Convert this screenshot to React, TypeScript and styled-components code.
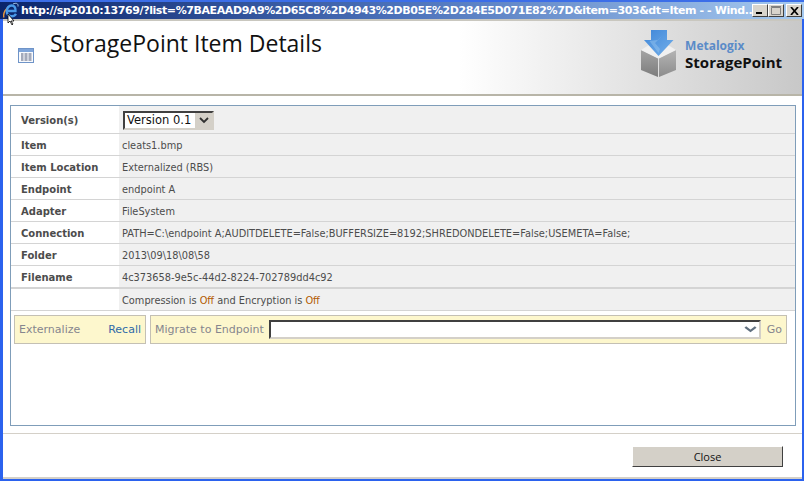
import React from 'react';
import styled, { createGlobalStyle } from 'styled-components';

const GlobalStyle = createGlobalStyle`
  html, body {
    margin: 0;
    padding: 0;
    background: #ffffff;
  }
`;

const Frame = styled.div`
  position: relative;
  width: 804px;
  height: 481px;
  box-sizing: border-box;
  display: flex;
  flex-direction: column;
  background: #2b62ee;
  padding: 0 2px 2px 3px;
  overflow: hidden;
  font-family: "DejaVu Sans", Verdana, sans-serif;
`;

const TitleBar = styled.div`
  height: 19px;
  flex: none;
  box-sizing: border-box;
  margin: 0 -2px 0 -3px;
  padding: 0 2px 0 3px;
  border-top: 2px solid #3c6ee8;
  display: flex;
  align-items: center;
  background: linear-gradient(90deg, #0a246a 0%, #4c72bb 50%, #a6caf0 100%);
`;

const TitleText = styled.div`
  flex: 1;
  min-width: 0;
  margin-left: 18px;
  color: #ffffff;
  font-size: 11px;
  font-weight: 700;
  letter-spacing: -0.41px;
  white-space: nowrap;
`;

const WinButtons = styled.div`
  display: flex;
  flex: none;
  margin-left: 5px;
`;

const WinButton = styled.div<{ $gap?: boolean }>`
  width: 16px;
  height: 13px;
  box-sizing: border-box;
  margin-left: ${p => (p.$gap ? 2 : 0)}px;
  background: #d8d4cc;
  border: 1px solid;
  border-color: #ffffff #404040 #404040 #ffffff;
  display: flex;
  align-items: center;
  justify-content: center;
`;

const Page = styled.div`
  flex: 1;
  min-height: 0;
  display: flex;
  flex-direction: column;
  background: #ffffff;
`;

const Header = styled.div`
  height: 77px;
  flex: none;
  box-sizing: border-box;
  border-top: 2px solid #c9c7bf;
  border-bottom: 2px solid #b8b5a8;
  background: linear-gradient(90deg, #ffffff 0%, #ffffff 57%, #c8c8c8 100%);
  display: flex;
`;

const PageIcon = styled.div`
  width: 16px;
  margin: 27px 0 0 15px;
`;

const PageTitle = styled.h1`
  flex: 1;
  margin: 8px 0 0 16px;
  font-family: "Open Sans", sans-serif;
  font-size: 23px;
  font-weight: 400;
  line-height: 28px;
  color: #111111;
  white-space: nowrap;
`;

const Logo = styled.div`
  display: flex;
  align-items: flex-start;
  padding-top: 9px;
  gap: 8px;
  margin-right: 20px;
`;

const LogoWords = styled.div`
  display: flex;
  flex-direction: column;
  margin-top: 8px;
`;

const LogoTop = styled.span`
  font-family: "Open Sans", sans-serif;
  font-size: 12px;
  font-weight: 700;
  line-height: 15px;
  color: #5b8bc8;
`;

const LogoBottom = styled.span`
  font-family: "Open Sans", sans-serif;
  font-size: 15px;
  font-weight: 700;
  line-height: 19px;
  color: #111111;
`;

const Panel = styled.div`
  margin: 9px 6px 0 7px;
  height: 321px;
  flex: none;
  box-sizing: border-box;
  border: 1px solid #7f9db9;
  display: flex;
  flex-direction: column;
`;

const Row = styled.div<{ $h: number; $thick?: boolean }>`
  height: ${p => p.$h}px;
  flex: none;
  box-sizing: border-box;
  display: flex;
  border-bottom: ${p => (p.$thick ? 2 : 1)}px solid #d4d4d4;
`;

const Label = styled.div`
  width: 108px;
  box-sizing: border-box;
  padding: 1px 0 0 10px;
  display: flex;
  align-items: center;
  font-size: 10px;
  font-weight: 700;
  color: #4c4c4c;
`;

const Value = styled.div`
  flex: 1;
  box-sizing: border-box;
  padding: 1px 0 0 3px;
  display: flex;
  align-items: center;
  background: #f0f0f0;
  font-size: 9.8px;
  color: #4c4c4c;
  white-space: pre;
`;

const Off = styled.span`
  color: #b35a00;
`;

const SelectBox = styled.div<{ $width?: number }>`
  height: 19px;
  box-sizing: border-box;
  display: flex;
  align-items: center;
  background: #ffffff;
  border: 2px solid;
  border-color: #404040 #d4d0c8 #d4d0c8 #404040;
  ${p => (p.$width ? `width: ${p.$width}px; margin-left: 1px;` : 'flex: 1;')}
`;

const SelectText = styled.div`
  flex: 1;
  padding-left: 2px;
  font-size: 11.5px;
  color: #111111;
`;

const SelectArrow = styled.div<{ $flat?: boolean }>`
  width: 17px;
  height: 15px;
  flex: none;
  display: flex;
  align-items: center;
  justify-content: center;
  background: ${p => (p.$flat ? '#ffffff' : '#d4d0c8')};
`;

const Actions = styled.div`
  display: flex;
  gap: 4px;
  margin: 4px 8px 0 3px;
`;

const ActionBox = styled.div<{ $grow?: boolean }>`
  height: 29px;
  box-sizing: border-box;
  border: 1px solid #c4c0b4;
  background: #fdf7cd;
  display: flex;
  align-items: center;
  padding: 0 4px;
  font-size: 11px;
  color: #86868e;
  ${p => (p.$grow ? 'flex: 1;' : 'width: 132px; justify-content: space-between;')}
`;

const ActionLink = styled.span`
  color: #2f6aa8;
`;

const GoLabel = styled.span`
  margin-left: 6px;
`;

const EndpointLabel = styled.span`
  margin-right: 5px;
`;

const Footer = styled.div`
  flex: 1;
  margin-top: 7px;
  border-top: 1px solid #d4d0c8;
  border-bottom: 2px solid #d4d0c8;
  display: flex;
  justify-content: flex-end;
  align-items: flex-start;
  padding: 12px 19px 0 0;
`;

const CloseButton = styled.button`
  width: 151px;
  height: 21px;
  box-sizing: border-box;
  padding: 0;
  background: #d4d0c8;
  border: 1px solid;
  border-color: #ffffff #404040 #404040 #ffffff;
  font-family: "Open Sans", sans-serif;
  font-size: 11px;
  color: #111111;
`;

const IeIcon = styled.svg`
  position: absolute;
  left: 3px;
  top: 2px;
`;

const Cursor = styled.svg`
  position: absolute;
  left: 7px;
  top: 14px;
`;

const Chevron = ({ colour = '#303030', w = 10 }: { colour?: string; w?: number }) => (
  <svg width={w} height="7" viewBox="0 0 10 7" preserveAspectRatio="none">
    <path d="M1 1l4 4 4-4" fill="none" stroke={colour} strokeWidth="1.8" />
  </svg>
);

const rows: [string, string][] = [
  ['Item', 'cleats1.bmp'],
  ['Item Location', 'Externalized (RBS)'],
  ['Endpoint', 'endpoint A'],
  ['Adapter', 'FileSystem'],
  ['Connection', 'PATH=C:\\endpoint A;AUDITDELETE=False;BUFFERSIZE=8192;SHREDONDELETE=False;USEMETA=False;'],
  ['Folder', '2013\\09\\18\\08\\58'],
];

export default function App() {
  return (
    <Frame>
      <GlobalStyle />
      <TitleBar>
        <TitleText>http://sp2010:13769/?list=%7BAEAAD9A9%2D65C8%2D4943%2DB05E%2D284E5D071E82%7D&amp;item=303&amp;dt=Item - - Wind...</TitleText>
        <WinButtons>
          <WinButton>
            <svg width="10" height="9" viewBox="0 0 10 9"><rect x="1" y="6" width="6" height="2" fill="#000" /></svg>
          </WinButton>
          <WinButton>
            <svg width="10" height="9" viewBox="0 0 10 9"><path d="M.5 1.5h9v7h-9z" fill="none" stroke="#808080" /><path d="M0 .5h10" stroke="#808080" /></svg>
          </WinButton>
          <WinButton $gap>
            <svg width="9" height="8" viewBox="0 0 9 8"><path d="M1 0l7 8M8 0L1 8" stroke="#000" strokeWidth="1.7" /></svg>
          </WinButton>
        </WinButtons>
      </TitleBar>
      <IeIcon width="16" height="17" viewBox="0 0 16 17">
        <path d="M1 15.500C-.5 11.500 3 6 7 3.500" fill="none" stroke="#e8983c" strokeWidth="1.400" />
        <path d="M10 2C12.500 .8 15.500 .8 15 4.500" fill="none" stroke="#a8c8e8" strokeWidth="1" />
        <path d="M5 9h7.500C13 5.500 11 3.500 8.800 3.500 6 3.500 3.700 6 3.700 9.200c0 3 2.300 5 5 5 1.800 0 3.300-.8 4.300-2.400" fill="none" stroke="#4a9ae8" strokeWidth="2.400" />
      </IeIcon>
      <Cursor width="9" height="12" viewBox="0 0 9 12">
        <path d="M1 0v9l2-2 2 4 1-1-2-3h3z" fill="#fff" stroke="#000" strokeWidth=".8" />
      </Cursor>
      <Page>
        <Header>
          <PageIcon>
            <svg width="16" height="15" viewBox="0 0 16 15">
              <rect x=".5" y=".5" width="15" height="14" fill="#f8fafd" stroke="#6f94c8" />
              <rect x="1" y="1" width="14" height="3" fill="#7fa5da" />
              <path d="M3 6h2.500M6.500 6h3M10.500 6h3M3 8h2.500M6.500 8h3M10.500 8h3M3 10h2.500M6.500 10h3M10.500 10h3M3 12h2.500M6.500 12h3M10.500 12h3" stroke="#505a78" />
            </svg>
          </PageIcon>
          <PageTitle>StoragePoint Item Details</PageTitle>
          <Logo>
            <svg width="36" height="48" viewBox="0 0 36 48">
              <defs>
                <linearGradient id="boxLeft" x1="0" y1="0" x2="0" y2="1">
                  <stop offset="0" stopColor="#a4a4a4" />
                  <stop offset="1" stopColor="#7c7c7c" />
                </linearGradient>
                <linearGradient id="boxRight" x1="0" y1="0" x2="0" y2="1">
                  <stop offset="0" stopColor="#b4b4b4" />
                  <stop offset="1" stopColor="#8c8c8c" />
                </linearGradient>
                <linearGradient id="arrow" x1="0" y1="0" x2="1" y2="1">
                  <stop offset="0" stopColor="#3f86d8" />
                  <stop offset="1" stopColor="#74b0ea" />
                </linearGradient>
              </defs>
              <path d="M0 20l17 8.500V47L0 40z" fill="url(#boxLeft)" />
              <path d="M35 20l-17 8.500V47l17-7z" fill="url(#boxRight)" />
              <path d="M0 20l8-5 9.500 11 9.500-11 8 5-17.500 8.500z" fill="#f0f0f0" />
              <path d="M10 0h16v10h6.500L17.500 26 3 10h7z" fill="url(#arrow)" />
              <path d="M21 6l-7 7 5 6-1.500 4-9-12 8-1z" fill="#9cc8f0" opacity=".45" />
            </svg>
            <LogoWords>
              <LogoTop>Metalogix</LogoTop>
              <LogoBottom>StoragePoint</LogoBottom>
            </LogoWords>
          </Logo>
        </Header>
        <Panel>
          <Row $h={28}>
            <Label>Version(s)</Label>
            <Value>
              <SelectBox $width={91}>
                <SelectText>Version 0.1</SelectText>
                <SelectArrow><Chevron /></SelectArrow>
              </SelectBox>
            </Value>
          </Row>
          {rows.map(([label, value]) => (
            <Row key={label} $h={22}>
              <Label>{label}</Label>
              <Value>{value}</Value>
            </Row>
          ))}
          <Row $h={23} $thick>
            <Label>Filename</Label>
            <Value>4c373658-9e5c-44d2-8224-702789dd4c92</Value>
          </Row>
          <Row $h={22}>
            <Label />
            <Value>
              Compression is <Off>Off</Off> and Encryption is <Off>Off</Off>
            </Value>
          </Row>
          <Actions>
            <ActionBox>
              <span>Externalize</span>
              <ActionLink>Recall</ActionLink>
            </ActionBox>
            <ActionBox $grow>
              <EndpointLabel>Migrate to Endpoint</EndpointLabel>
              <SelectBox>
                <SelectText />
                <SelectArrow $flat><Chevron colour="#607080" w={13} /></SelectArrow>
              </SelectBox>
              <GoLabel>Go</GoLabel>
            </ActionBox>
          </Actions>
        </Panel>
        <Footer>
          <CloseButton>Close</CloseButton>
        </Footer>
      </Page>
    </Frame>
  );
}
